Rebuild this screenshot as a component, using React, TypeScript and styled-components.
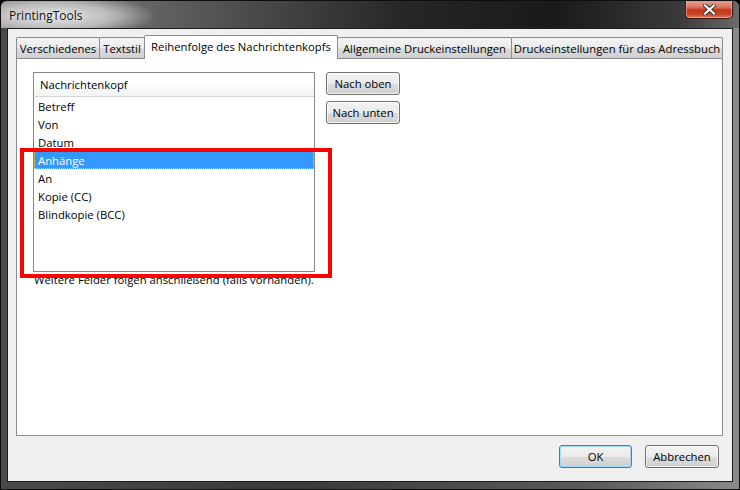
import React from 'react';
import styled, { createGlobalStyle } from 'styled-components';

const Global = createGlobalStyle`
  html, body { margin: 0; padding: 0; background: #000; }
  body {
    font-family: "Open Sans", "Noto Sans", sans-serif;
    font-size: 11.3px;
    color: #000;
  }
  #root { width: 740px; height: 490px; }
  * { box-sizing: border-box; }
`;

const Window = styled.div`
  width: 740px;
  height: 490px;
  display: flex;
  flex-direction: column;
  padding: 0 6px 7px 6px;
  border: 1px solid #0e0e0e;
  border-radius: 7px 7px 0 0;
  background: linear-gradient(90deg, #4a4a4a 0%, #3a3a3a 40%, #5a5a5a 80%, #8a8a8a 100%);
  overflow: hidden;
`;

const TitleBar = styled.div`
  height: 27px;
  margin: 0 -6px;
  display: flex;
  align-items: flex-start;
  background:
    radial-gradient(ellipse 100px 22px at 55px 15px, rgba(230,230,230,0.97) 0%, rgba(205,205,205,0.8) 55%, rgba(120,120,120,0) 100%),
    linear-gradient(90deg, #888 0%, #555 28%, #262626 55%, #1a1a1a 75%, #3a3a3a 92%, #6a6a6a 100%);
`;

const Title = styled.div`
  padding: 6px 0 0 8px;
  font-size: 12px;
  color: #111;
  text-shadow: 0 0 6px rgba(255,255,255,0.9);
`;

const Spacer = styled.div`
  flex: 1;
`;

const CloseButton = styled.div`
  width: 48px;
  height: 19px;
  margin: -1px 6px 0 0;
  border: 1px solid #3a1a14;
  border-top: none;
  border-radius: 0 0 5px 5px;
  background: linear-gradient(180deg, #e8a593 0%, #d9765f 40%, #c2391c 55%, #c9472a 80%, #e07a5a 100%);
  box-shadow: inset 0 0 0 1px rgba(255,210,190,0.5);
  display: flex;
  align-items: center;
  justify-content: center;
`;

const Client = styled.div`
  flex: 1;
  display: flex;
  flex-direction: column;
  background: #f0f0f0;
  border: 1px solid #1c1c1c;
  padding: 7px 9px 0 8px;
`;

const TabRow = styled.div`
  height: 23px;
  display: flex;
  align-items: flex-end;
  position: relative;
  z-index: 1;
  margin-bottom: -1px;
`;

const Tab = styled.div<{ $w: number; $active?: boolean }>`
  width: ${p => p.$w}px;
  height: ${p => (p.$active ? 24 : 21)}px;
  margin-left: -1px;
  margin-bottom: ${p => (p.$active ? 0 : 1)}px;
  &:first-child { margin-left: 0; }
  border: 1px solid #898c95;
  border-bottom: none;
  border-radius: 2px 2px 0 0;
  background: ${p => (p.$active ? '#fff' : 'linear-gradient(180deg, #f3f3f3 0%, #ebebeb 50%, #dddddd 51%, #cfcfcf 100%)')};
  position: relative;
  z-index: ${p => (p.$active ? 2 : 1)};
  display: flex;
  align-items: center;
  justify-content: center;
  padding-bottom: ${p => (p.$active ? 3 : 0)}px;
  white-space: nowrap;
`;

const Panel = styled.div`
  height: 378px;
  background: #fff;
  border: 1px solid #898c95;
  padding: 13px 16px;
  position: relative;
`;

const Row = styled.div`
  display: flex;
  gap: 11px;
  align-items: flex-start;
`;

const ListBox = styled.div`
  width: 282px;
  height: 200px;
  border: 1px solid #828790;
  background: #fff;
  display: flex;
  flex-direction: column;
`;

const ListHeader = styled.div`
  height: 24px;
  border-bottom: 1px solid #d5d5d5;
  background: linear-gradient(180deg, #ffffff 0%, #ffffff 40%, #f3f4f6 100%);
  padding: 0 0 0 6px;
  display: flex;
  align-items: center;
`;

const ListItem = styled.div<{ $selected?: boolean }>`
  height: 18px;
  padding-left: 4px;
  display: flex;
  align-items: center;
  background: ${p => (p.$selected ? '#3399ff' : 'transparent')};
  color: ${p => (p.$selected ? '#fff' : '#000')};
  outline: ${p => (p.$selected ? '1px dotted #e9cf7a' : 'none')};
  outline-offset: -1px;
`;

const ButtonColumn = styled.div`
  display: flex;
  flex-direction: column;
  gap: 6px;
`;

const Button = styled.button<{ $default?: boolean }>`
  width: ${p => (p.$default ? 73 : 74)}px;
  height: 23px;
  padding: 0;
  font: inherit;
  color: #000;
  border: 1px solid ${p => (p.$default ? '#3c7fb1' : '#707070')};
  border-radius: 3px;
  background: linear-gradient(180deg, #f2f2f2 0%, #ebebeb 50%, #dddddd 51%, #cfcfcf 100%);
  box-shadow: inset 0 0 0 1px ${p => (p.$default ? '#a6dcf7' : 'rgba(255,255,255,0.75)')};
`;

const Note = styled.div`
  margin-top: 0;
  padding-left: 1px;
`;

const Highlight = styled.div`
  position: absolute;
  left: 3px;
  top: 89px;
  width: 312px;
  height: 130px;
  border: 4px solid #f00;
  pointer-events: none;
`;

const Footer = styled.div`
  display: flex;
  justify-content: flex-end;
  gap: 13px;
  padding: 9px 4px 0 0;
`;

const tabs = [
  { label: 'Verschiedenes', w: 84 },
  { label: 'Textstil', w: 46 },
  { label: 'Reihenfolge des Nachrichtenkopfs', w: 194, active: true },
  { label: 'Allgemeine Druckeinstellungen', w: 175 },
  { label: 'Druckeinstellungen für das Adressbuch', w: 212 },
];

const items = ['Betreff', 'Von', 'Datum', 'Anhänge', 'An', 'Kopie (CC)', 'Blindkopie (BCC)'];

export default function App() {
  return (
    <>
      <Global />
      <Window>
        <TitleBar>
          <Title>PrintingTools</Title>
          <Spacer />
          <CloseButton>
            <svg width="13" height="11" viewBox="0 0 13 11">
              <path d="M2 1.5 L11 9.5 M11 1.5 L2 9.5" stroke="#3a2a28" strokeWidth="4" strokeLinecap="square" />
              <path d="M2 1.5 L11 9.5 M11 1.5 L2 9.5" stroke="#fff" strokeWidth="2.2" strokeLinecap="square" />
            </svg>
          </CloseButton>
        </TitleBar>
        <Client>
          <TabRow>
            {tabs.map(t => (
              <Tab key={t.label} $w={t.w} $active={t.active}>{t.label}</Tab>
            ))}
          </TabRow>
          <Panel>
            <Row>
              <ListBox>
                <ListHeader>Nachrichtenkopf</ListHeader>
                {items.map(i => (
                  <ListItem key={i} $selected={i === 'Anhänge'}>{i}</ListItem>
                ))}
              </ListBox>
              <ButtonColumn>
                <Button>Nach oben</Button>
                <Button>Nach unten</Button>
              </ButtonColumn>
            </Row>
            <Note>Weitere Felder folgen anschließend (falls vorhanden).</Note>
            <Highlight />
          </Panel>
          <Footer>
            <Button $default>OK</Button>
            <Button>Abbrechen</Button>
          </Footer>
        </Client>
      </Window>
    </>
  );
}
